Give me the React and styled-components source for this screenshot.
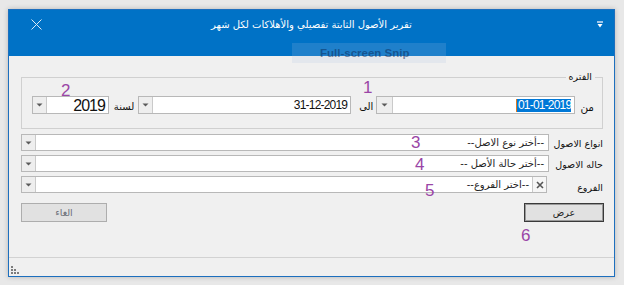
import React from 'react'
import styled, { createGlobalStyle } from 'styled-components'

const GlobalStyle = createGlobalStyle`
  html, body {
    margin: 0;
    padding: 0;
    background: #e8e8e8;
  }
  body {
    font-family: "Liberation Sans", "DejaVu Sans", sans-serif;
  }
`

const Page = styled.div`
  width: 624px;
  height: 285px;
  padding: 9px 0 0 8px;
  box-sizing: border-box;
`

const Window = styled.div`
  position: relative;
  width: 607px;
  height: 268px;
  border: 1px solid #1d6fbe;
  box-sizing: border-box;
  background: #f0f0f0;
  box-shadow: 0 0 5px rgba(0, 0, 0, 0.22);
  display: flex;
  flex-direction: column;
`

const TitleBar = styled.div`
  height: 46px;
  flex: none;
  background: #0072c6;
  direction: ltr;
`

const TitleRow = styled.div`
  height: 28px;
  display: grid;
  grid-template-columns: 1fr auto 1fr;
  align-items: center;
`

const CloseBox = styled.div`
  padding-left: 22px;
  display: flex;
  align-items: center;
`

const TitleText = styled.div`
  color: #ffffff;
  font-family: "DejaVu Sans", sans-serif;
  font-size: 10px;
  direction: rtl;
  white-space: nowrap;
`

const MenuBox = styled.div`
  justify-self: end;
  padding-right: 11px;
  display: flex;
`

const SnipOverlay = styled.div`
  position: absolute;
  left: 283px;
  top: 33px;
  width: 154px;
  height: 20px;
  background: rgba(170, 195, 225, 0.18);
  box-sizing: border-box;
  padding-left: 28px;
  display: flex;
  align-items: center;
  direction: ltr;
  font-family: "Liberation Sans", sans-serif;
  font-size: 11.5px;
  font-weight: 700;
  color: rgba(10, 40, 85, 0.5);
`

const Body = styled.div`
  flex: 1;
  direction: rtl;
  padding: 21px 11px 0 12px;
  display: flex;
  flex-direction: column;
`

const GroupBox = styled.div`
  position: relative;
  border: 1px solid #d0d0d0;
  padding: 18px 8px 14px 10px;
`

const Legend = styled.span`
  position: absolute;
  top: -8px;
  right: 7px;
  padding: 0 3px;
  background: #f0f0f0;
  font-family: "DejaVu Sans", sans-serif;
  font-size: 9.5px;
  line-height: 14px;
  color: #111;
`

const PeriodRow = styled.div`
  display: flex;
  align-items: flex-end;
  height: 18px;
`

const Label = styled.span`
  flex: none;
  white-space: nowrap;
  font-family: "DejaVu Sans", sans-serif;
  font-size: ${p => p.$size || 10}px;
  line-height: 14px;
  color: #111;
  text-align: right;
  padding-top: ${p => p.$lower || 0}px;
  margin-left: ${p => p.$gap || 0}px;
  width: ${p => (p.$width ? `${p.$width}px` : 'auto')};
`

const InputBox = styled.div`
  display: flex;
  height: ${p => p.$height || 17}px;
  width: ${p => (p.$width ? `${p.$width}px` : 'auto')};
  flex: ${p => (p.$width ? 'none' : '1')};
  margin-left: ${p => p.$gap || 0}px;
  margin-right: ${p => p.$inset || 0}px;
  box-sizing: border-box;
  border: 1px solid #b8b8b8;
  background: #ffffff;
`

const Field = styled.div`
  flex: 1;
  display: flex;
  align-items: center;
  padding-right: ${p => p.$pad || 4}px;
  overflow: hidden;
  white-space: nowrap;
  font-family: "DejaVu Sans", sans-serif;
  font-size: 10px;
  color: #222;
`

const DateText = styled.span`
  font-family: "Liberation Sans", sans-serif;
  font-size: ${p => p.$size || 12}px;
  letter-spacing: ${p => p.$spacing || -0.8}px;
  line-height: ${p => (p.$size || 12) + 1}px;
  color: ${p => (p.$selected ? '#ffffff' : '#111111')};
  background: ${p => (p.$selected ? '#0078d7' : 'transparent')};
  border-left: ${p => (p.$selected ? '1px solid #e07a20' : 'none')};
  padding-left: ${p => (p.$selected ? 1 : 0)}px;
  direction: ltr;
`

const DropButton = styled.div`
  flex: none;
  width: ${p => p.$width || 13}px;
  background: #eeeeee;
  border-right: 1px solid #cacaca;
  display: flex;
  align-items: center;
  justify-content: center;
`

const ClearButton = styled.div`
  flex: none;
  width: 13px;
  background: #f6f6f6;
  border-left: 1px solid #cacaca;
  display: flex;
  align-items: center;
  justify-content: center;
`

const Rows = styled.div`
  margin-top: 5px;
  display: flex;
  flex-direction: column;
  gap: 4px;
`

const Row = styled.div`
  display: flex;
  align-items: ${p => (p.$top ? 'flex-start' : 'flex-end')};
  height: 17px;
`

const Buttons = styled.div`
  margin-top: 10px;
  margin-right: -1px;
  display: flex;
  justify-content: space-between;
`

const Button = styled.div`
  width: ${p => p.$width}px;
  height: 19px;
  box-sizing: border-box;
  background: #e1e1e1;
  border: 1px solid ${p => (p.$primary ? '#3a3a3a' : '#adadad')};
  box-shadow: ${p => (p.$primary ? 'inset 0 0 0 1px #9a9a9a' : 'none')};
  display: flex;
  align-items: center;
  justify-content: center;
  font-family: "DejaVu Sans", sans-serif;
  font-size: 9.5px;
  color: ${p => (p.$primary ? '#222' : '#6a6f78')};
`

const Footer = styled.div`
  height: 18px;
  flex: none;
  border-top: 1px solid #d2d2d2;
  position: relative;
`

const Grip = styled.svg`
  position: absolute;
  left: 2px;
  bottom: 1px;
`

const Note = styled.span`
  position: absolute;
  left: ${p => p.$x}px;
  top: ${p => p.$y}px;
  font-family: "Liberation Sans", sans-serif;
  font-size: 17px;
  line-height: 17px;
  color: #9a45a6;
`

const Arrow = () => (
  <svg width="7" height="4" viewBox="0 0 7 4">
    <path d="M0.5 0.5 H6.5 L3.5 3.5 Z" fill="#5a5a5a" />
  </svg>
)

const DateInput = ({ width, gap, btn, children }) => (
  <InputBox $width={width} $gap={gap} $height={18}>
    <Field $pad={3}>{children}</Field>
    <DropButton $width={btn}>
      <Arrow />
    </DropButton>
  </InputBox>
)

const ComboInput = ({ text, clear }) => (
  <InputBox $height={17} $inset={clear ? 2 : 0}>
    {clear && (
      <ClearButton>
        <svg width="8" height="8" viewBox="0 0 8 8">
          <path d="M1 1 L7 7 M7 1 L1 7" stroke="#555" strokeWidth="1.6" />
        </svg>
      </ClearButton>
    )}
    <Field $pad={clear ? 3 : 4}>{text}</Field>
    <DropButton>
      <Arrow />
    </DropButton>
  </InputBox>
)

export default function App() {
  return (
    <Page>
      <GlobalStyle />
      <Window>
        <TitleBar>
          <TitleRow>
            <CloseBox>
              <svg width="11" height="11" viewBox="0 0 11 11">
                <path d="M0.5 0.5 L10.5 10.5 M10.5 0.5 L0.5 10.5" stroke="#dbe9f6" strokeWidth="1" />
              </svg>
            </CloseBox>
            <TitleText>تقرير الأصول الثابتة تفصيلي والأهلاكات لكل شهر</TitleText>
            <MenuBox>
              <svg width="6" height="7" viewBox="0 0 6 7">
                <rect x="0" y="0" width="6" height="2" fill="#9fc6ea" />
                <path d="M0.5 3 H5.5 L3 6.5 Z" fill="#ffffff" />
              </svg>
            </MenuBox>
          </TitleRow>
        </TitleBar>

        <Body>
          <GroupBox>
            <Legend>الفتره</Legend>
            <PeriodRow>
              <Label $size={10.5} $gap={5}>من</Label>
              <DateInput width={199} gap={3} btn={15}>
                <DateText $selected>01-01-2019</DateText>
              </DateInput>
              <Label $gap={8}>الى</Label>
              <DateInput width={213} gap={4} btn={13}>
                <DateText>31-12-2019</DateText>
              </DateInput>
              <Label $gap={5}>لسنة</Label>
              <InputBox $height={18}>
                <Field $pad={3}>
                  <DateText $size={16} $spacing={-1}>2019</DateText>
                </Field>
                <DropButton>
                  <Arrow />
                </DropButton>
              </InputBox>
            </PeriodRow>
          </GroupBox>

          <Rows>
            <Row>
              <Label $size={9.5} $width={49} $gap={5}>انواع الاصول</Label>
              <ComboInput text="--أختر نوع الاصل--" />
            </Row>
            <Row>
              <Label $size={9.5} $width={49} $gap={5}>حاله الاصول</Label>
              <ComboInput text="--أختر حالة الأصل --" />
            </Row>
            <Row $top>
              <Label $size={9.5} $width={49} $gap={5} $lower={5}>الفروع</Label>
              <ComboInput text="--اختر الفروع--" clear />
            </Row>
          </Rows>

          <Buttons>
            <Button $width={80} $primary>عرض</Button>
            <Button $width={86}>الغاء</Button>
          </Buttons>
        </Body>

        <Footer>
          <Grip width="9" height="9" viewBox="0 0 9 9">
            <g fill="#7d7d7d">
              <rect x="0" y="0" width="2" height="2" />
              <rect x="0" y="3" width="2" height="2" />
              <rect x="3" y="3" width="2" height="2" />
              <rect x="0" y="6" width="2" height="2" />
              <rect x="3" y="6" width="2" height="2" />
              <rect x="6" y="6" width="2" height="2" />
            </g>
          </Grip>
        </Footer>

        <SnipOverlay>Full-screen Snip</SnipOverlay>

        <Note $x={354} $y={69}>1</Note>
        <Note $x={52} $y={72}>2</Note>
        <Note $x={402} $y={124}>3</Note>
        <Note $x={406} $y={146}>4</Note>
        <Note $x={416} $y={172}>5</Note>
        <Note $x={512} $y={217}>6</Note>
      </Window>
    </Page>
  )
}
